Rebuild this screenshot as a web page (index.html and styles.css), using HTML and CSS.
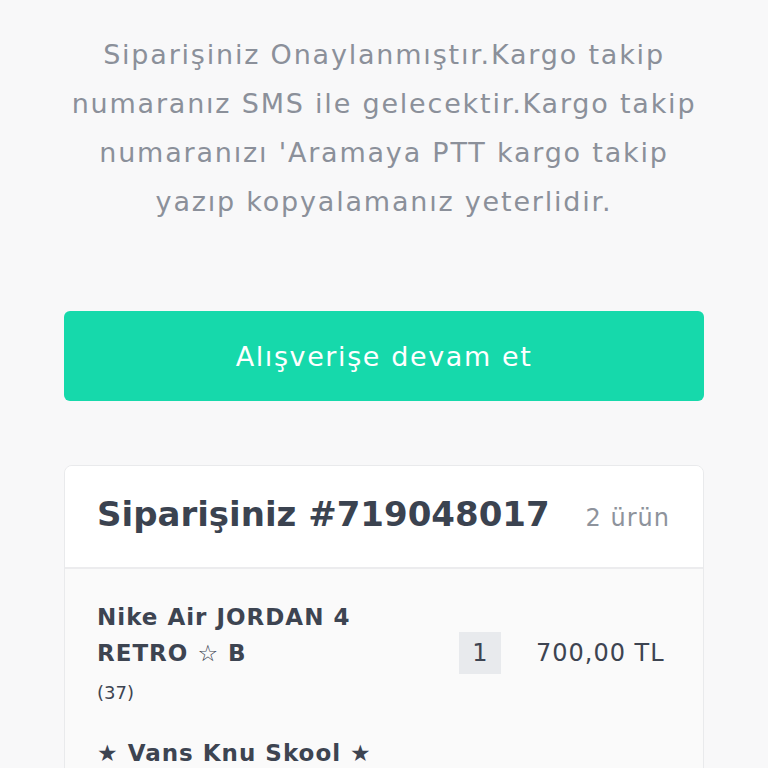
FILE: index.html
```html
<!DOCTYPE html>
<html lang="tr">
<head>
    <meta charset="UTF-8">
    <meta name="viewport" content="width=device-width, initial-scale=1.0">
    <title>Sipariş Onayı</title>
    <link rel="stylesheet" href="styles.css">
</head>
<body>
    <div class="container">
        <!-- Onay mesajı -->
        <p class="message">
            Siparişiniz Onaylanmıştır.Kargo takip<br>
            numaranız SMS ile gelecektir.Kargo takip<br>
            numaranızı 'Aramaya PTT kargo takip<br>
            yazıp kopyalamanız yeterlidir.
        </p>

        <button class="continue">Alışverişe devam et</button>

        <!-- Sipariş özeti -->
        <div class="card">
            <div class="card-head">
                <h2>Siparişiniz #719048017</h2>
                <span class="count">2 ürün</span>
            </div>
            <div class="items">
                <div class="item">
                    <div class="name">
                        <div class="title">Nike Air JORDAN 4<br>RETRO ☆ B</div>
                        <div class="variant">(37)</div>
                    </div>
                    <div class="qty">1</div>
                    <div class="price">700,00 TL</div>
                </div>
                <div class="item">
                    <div class="name">
                        <div class="title">★ Vans Knu Skool ★<br>Siyah</div>
                        <div class="variant">(38)</div>
                    </div>
                    <div class="qty">1</div>
                    <div class="price">680,00 TL</div>
                </div>
            </div>
        </div>
    </div>
</body>
</html>
```

FILE: styles.css
```css
body {
    font-family: "DejaVu Sans", "Noto Sans", sans-serif;
    background: #f8f8f9;
    margin: 0;
    padding: 0;
}

.container {
    padding: 0 64px;
}

.message {
    margin: 30px 0 0;
    text-align: center;
    font-size: 27px;
    line-height: 49px;
    letter-spacing: 1.8px;
    color: #8b909a;
}

/* Button */
.continue {
    display: block;
    width: 100%;
    height: 90px;
    margin-top: 85px;
    border: none;
    border-radius: 6px;
    background: #16d9ab;
    color: #fff;
    font-family: inherit;
    font-size: 27px;
    letter-spacing: 1.6px;
    cursor: pointer;
}

/* Card */
.card {
    margin-top: 64px;
    background: #fafafa;
    border: 1px solid #e9eaec;
    border-radius: 8px;
    overflow: hidden;
}

.card-head {
    display: flex;
    align-items: baseline;
    justify-content: space-between;
    height: 103px;
    box-sizing: border-box;
    padding: 28px 33px 0 32px;
    background: #fff;
    border-bottom: 2px solid #ececee;
}

.card-head h2 {
    margin: 0;
    font-size: 34px;
    font-weight: bold;
    color: #3b4350;
}

.count {
    font-size: 24px;
    letter-spacing: 1px;
    color: #8e939c;
}

.items {
    padding-top: 16px;
}

.item {
    display: grid;
    grid-template-columns: 327px 42px 1fr;
    column-gap: 35px;
    align-items: center;
    padding: 14px 32px;
}

.title {
    font-size: 23px;
    font-weight: bold;
    line-height: 36px;
    letter-spacing: 1px;
    color: #3d4451;
}

.variant {
    margin-top: 8px;
    font-size: 18px;
    line-height: 28px;
    color: #3d4451;
}

.qty {
    height: 42px;
    line-height: 42px;
    text-align: center;
    background: #e8eaed;
    font-size: 24px;
    color: #3d4451;
}

.price {
    font-size: 24px;
    letter-spacing: 1px;
    color: #3d4451;
}
```
